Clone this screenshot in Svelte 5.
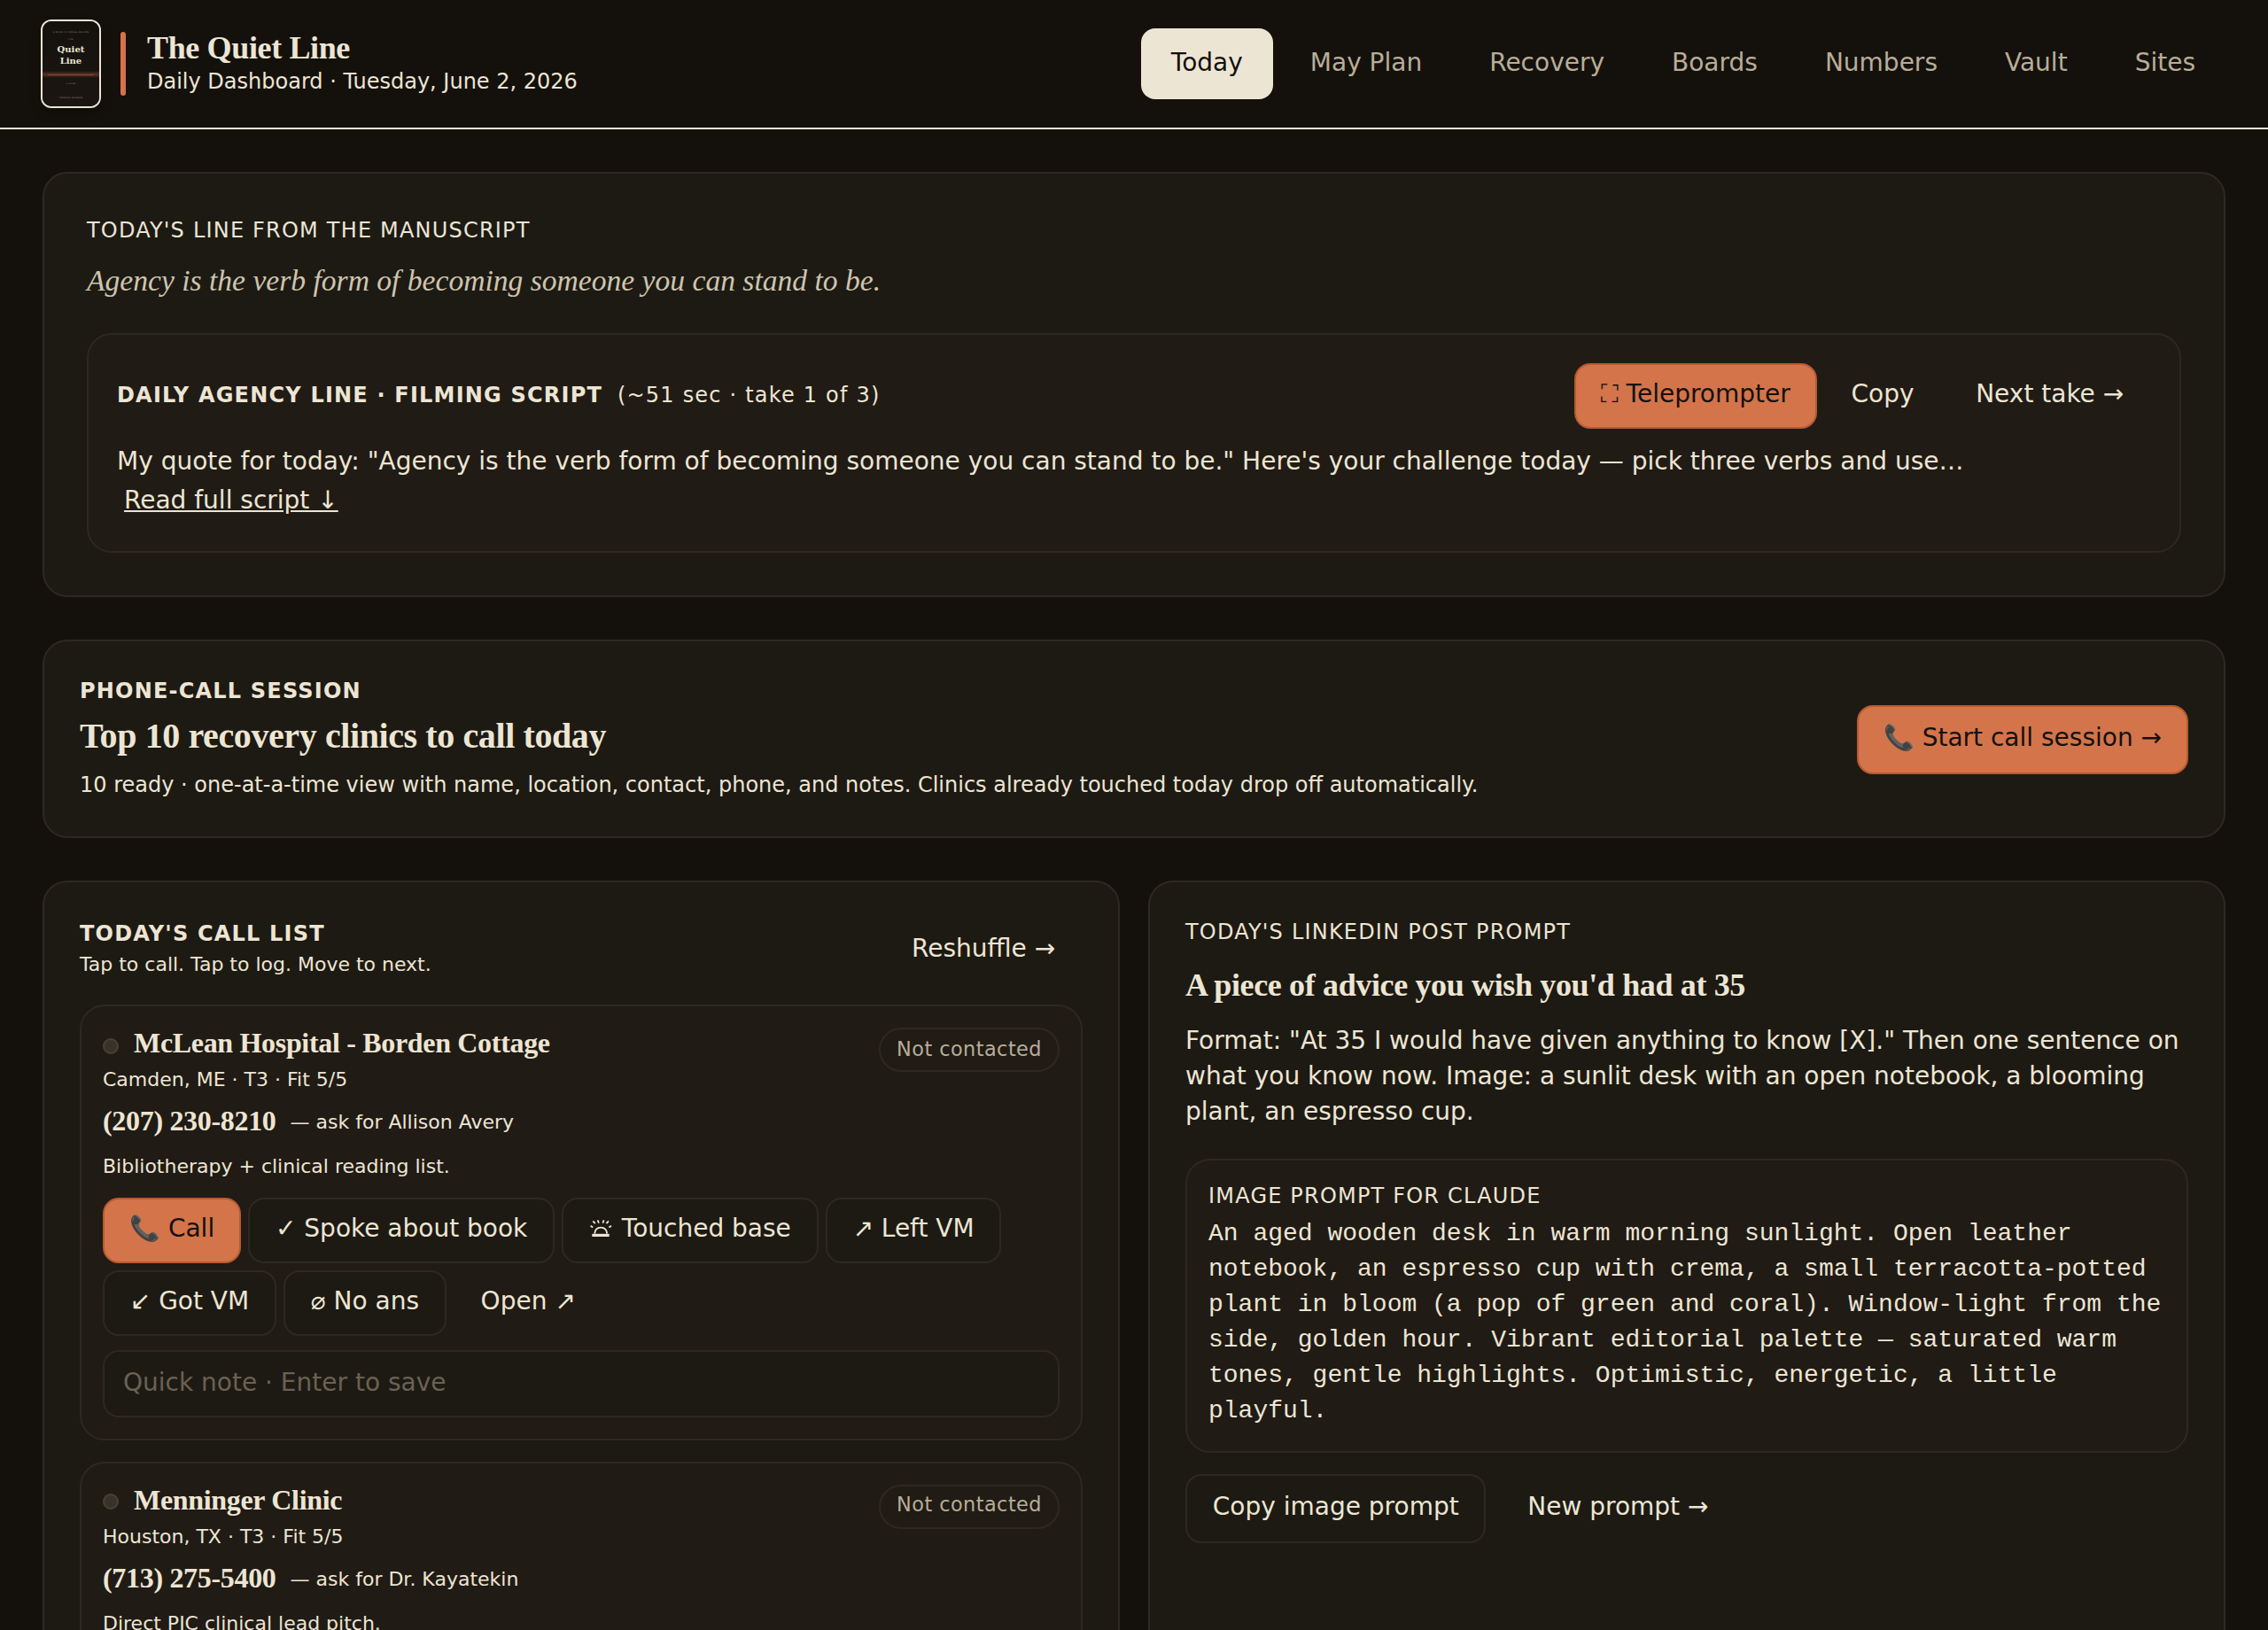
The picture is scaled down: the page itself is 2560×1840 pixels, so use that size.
<script>
  const nav = ['Today', 'May Plan', 'Recovery', 'Boards', 'Numbers', 'Vault', 'Sites'];

  const clinics = [
    {
      name: 'McLean Hospital - Borden Cottage',
      meta: 'Camden, ME · T3 · Fit 5/5',
      phone: '(207) 230-8210',
      ask: '— ask for Allison Avery',
      note: 'Bibliotherapy + clinical reading list.'
    },
    {
      name: 'Menninger Clinic',
      meta: 'Houston, TX · T3 · Fit 5/5',
      phone: '(713) 275-5400',
      ask: '— ask for Dr. Kayatekin',
      note: 'Direct PIC clinical lead pitch.'
    }
  ];
</script>

<div class="page">
  <header class="topbar">
    <div class="cover">
      <span class="tiny">A BOOK OF SMALL ROOMS</span>
      <span class="tiny the">THE</span>
      <span class="cover-title">Quiet</span>
      <span class="cover-title">Line</span>
      <span class="glow"></span>
      <span class="tiny novel">a novel</span>
      <span class="tiny author">TRISTAN WALKER</span>
    </div>
    <span class="accent"></span>
    <div class="brand">
      <h1>The Quiet Line</h1>
      <p>Daily Dashboard · Tuesday, June 2, 2026</p>
    </div>
    <nav>
      {#each nav as item, i}
        <a class:active={i === 0}>{item}</a>
      {/each}
    </nav>
  </header>

  <main>
    <section class="card manuscript">
      <div class="label">TODAY'S LINE FROM THE MANUSCRIPT</div>
      <p class="quote">Agency is the verb form of becoming someone you can stand to be.</p>
      <div class="inner script">
        <div class="script-head">
          <div class="script-label">
            <span class="label strong">DAILY AGENCY LINE · FILMING SCRIPT</span>
            <span class="label">(~51 sec · take 1 of 3)</span>
          </div>
          <div class="btns">
            <button class="btn primary">⛶ Teleprompter</button>
            <button class="btn ghost">Copy</button>
            <button class="btn ghost">Next take →</button>
          </div>
        </div>
        <div class="script-body">
          <p>My quote for today: "Agency is the verb form of becoming someone you can stand to be." Here's your challenge today — pick three verbs and use…</p>
          <a class="more">Read full script ↓</a>
        </div>
      </div>
    </section>

    <section class="card session">
      <div>
        <div class="label strong">PHONE-CALL SESSION</div>
        <h2>Top 10 recovery clinics to call today</h2>
        <p>10 ready · one-at-a-time view with name, location, contact, phone, and notes. Clinics already touched today drop off automatically.</p>
      </div>
      <button class="btn tall primary">📞 Start call session →</button>
    </section>

    <div class="columns">
      <section class="card calls">
        <div class="calls-head">
          <div>
            <div class="label strong">TODAY'S CALL LIST</div>
            <p class="small">Tap to call. Tap to log. Move to next.</p>
          </div>
          <button class="btn ghost">Reshuffle →</button>
        </div>
        {#each clinics as c}
          <article class="inner clinic">
            <div class="clinic-head">
              <div>
                <div class="name"><span class="dot"></span>{c.name}</div>
                <p class="small meta">{c.meta}</p>
              </div>
              <span class="pill">Not contacted</span>
            </div>
            <div class="phone"><b>{c.phone}</b><span class="small">{c.ask}</span></div>
            <p class="small note">{c.note}</p>
            <div class="btns wrap">
              <button class="btn primary">📞 Call</button>
              <button class="btn">✓ Spoke about book</button>
              <button class="btn">
                <svg class="bell" viewBox="0 0 28 20" fill="none" stroke="currentColor">
                  <path d="M3.3 18.4H22.7" stroke-width="3.2" />
                  <path d="M6.2 16.6C6.6 12 9 9.6 13.2 9.6S19.8 12 20.2 16.6" stroke-width="1.8" />
                  <path d="M1.6 7.8 4.2 9.6M4.3 2.4 6.8 5.2M9.6 1.4 11 4.6M16.6 1.4 15.4 4.6M21.9 2.4 19.5 5.2M25 7.8 22.4 9.6" stroke-width="1.8" />
                </svg> Touched base
              </button>
              <button class="btn">↗ Left VM</button>
              <button class="btn">↙ Got VM</button>
              <button class="btn">⌀ No ans</button>
              <button class="btn ghost">Open ↗</button>
            </div>
            <input placeholder="Quick note · Enter to save" />
          </article>
        {/each}
      </section>

      <section class="card prompt">
        <div class="label">TODAY'S LINKEDIN POST PROMPT</div>
        <h3>A piece of advice you wish you'd had at 35</h3>
        <p class="format">Format: "At 35 I would have given anything to know [X]." Then one sentence on what you know now. Image: a sunlit desk with an open notebook, a blooming plant, an espresso cup.</p>
        <div class="inner image-prompt">
          <div class="label">IMAGE PROMPT FOR CLAUDE</div>
          <p>An aged wooden desk in warm morning sunlight. Open leather notebook, an espresso cup with crema, a small terracotta-potted plant in bloom (a pop of green and coral). Window-light from the side, golden hour. Vibrant editorial palette — saturated warm tones, gentle highlights. Optimistic, energetic, a little playful.</p>
        </div>
        <div class="btns wide">
          <button class="btn tall">Copy image prompt</button>
          <button class="btn tall ghost">New prompt →</button>
        </div>
      </section>
    </div>
  </main>
</div>

<style>
  :global(body) {
    background: #14110c;
    overflow: hidden;
  }

  .page {
    --cream: #ede5d3;
    --line: #2f2822;
    --surface: #1d1a13;
    --inset: #201b15;
    --serif: 'Liberation Serif', serif;
    height: 1840px;
    overflow: hidden;
    background: #14110c;
    color: var(--cream);
    font-family: 'DejaVu Sans', sans-serif;
    font-size: 28px;
  }

  .page * {
    box-sizing: border-box;
  }

  h1,
  h2,
  h3,
  p {
    margin: 0;
  }

  .topbar {
    height: 146px;
    padding: 0 48px;
    display: flex;
    align-items: center;
    gap: 24px;
    border-bottom: 2px solid var(--cream);
  }

  .cover {
    width: 64px;
    height: 96px;
    border-radius: 10px;
    box-shadow: 0 0 0 2px var(--cream), 0 6px 14px rgba(0, 0, 0, 0.3);
    background: linear-gradient(#14110d, #1c1613);
    display: flex;
    flex-direction: column;
    align-items: center;
    overflow: hidden;
    white-space: nowrap;
    font-family: 'DejaVu Serif', serif;
  }

  .tiny {
    height: 4px;
    margin-top: 11px;
    font-size: 2.5px;
    line-height: 4px;
    letter-spacing: 0.2px;
    color: #a09683;
  }

  .tiny.the {
    margin-top: 4px;
    margin-bottom: 2px;
  }

  .cover-title {
    font-size: 10px;
    line-height: 13px;
    font-weight: 700;
  }

  .glow {
    width: 64px;
    height: 8px;
    margin-top: 5px;
    flex: none;
    background:
      linear-gradient(#8a4d33, #8a4d33) center / 52px 1px no-repeat,
      linear-gradient(transparent, rgba(150, 80, 50, 0.5), transparent);
  }

  .tiny.novel {
    margin-top: 5px;
  }

  .tiny.author {
    margin-top: 12px;
  }

  .accent {
    width: 6px;
    height: 72px;
    border-radius: 3px;
    background: #d3744a;
  }

  .brand {
    flex: 1;
  }

  h1 {
    font: 700 36px/40px var(--serif);
    letter-spacing: -0.01em;
  }

  .brand p {
    font-size: 24px;
    line-height: 36px;
  }

  nav {
    display: flex;
    gap: 8px;
  }

  nav a {
    padding: 19px 34px 22px;
    border-radius: 16px;
    line-height: 39px;
    color: #b9ad97;
  }

  nav a.active {
    background: var(--cream);
    color: #14110c;
  }

  main {
    padding: 48px;
    display: flex;
    flex-direction: column;
    gap: 48px;
  }

  .card,
  .inner {
    border: 2px solid var(--line);
    border-radius: 28px;
  }

  .card {
    padding: 40px;
    background: var(--surface);
  }

  .inner {
    background: var(--inset);
  }

  .label {
    font-size: 24px;
    line-height: 32px;
    letter-spacing: 0.05em;
  }

  .strong {
    font-weight: 700;
  }

  .small {
    font-size: 22px;
    line-height: 37px;
  }

  .btns {
    display: flex;
    gap: 8px;
  }

  .btns.wide {
    gap: 16px;
  }

  .btns.wrap {
    flex-wrap: wrap;
  }

  .btn {
    height: 74px;
    padding: 15px 28.8px 20px;
    border: 2px solid var(--line);
    border-radius: 18px;
    background: var(--surface);
    color: var(--cream);
    font: inherit;
    line-height: 35px;
    white-space: nowrap;
  }

  .btn.tall {
    height: 78px;
    padding-top: 17px;
    padding-bottom: 22px;
  }

  .btn.primary {
    padding-left: 28px;
    padding-right: 28px;
    background: #d3744a;
    border-color: #b85a30;
    color: #14110c;
  }

  .btn.ghost {
    background: transparent;
    border-color: transparent;
  }

  .bell {
    width: 28px;
    height: 20px;
    vertical-align: baseline;
  }

  .manuscript {
    height: 480px;
    padding: 48px;
  }

  .quote {
    margin-top: 16px;
    font: italic 33.6px/49px var(--serif);
    color: #cfc4b0;
  }

  .script {
    height: 248px;
    margin-top: 35px;
    padding: 32px;
  }

  .script-head {
    display: flex;
    justify-content: space-between;
    align-items: center;
  }

  .script-label {
    display: flex;
    gap: 17px;
    padding-bottom: 2px;
  }

  .script-body {
    margin-top: 15px;
    line-height: 44px;
  }

  .more {
    margin-left: 8px;
    text-decoration: underline;
  }

  .session {
    height: 224px;
    display: flex;
    justify-content: space-between;
    align-items: center;
  }

  .session .btn {
    margin-top: 2px;
  }

  h2 {
    margin-top: 8px;
    font: 700 40px/53px var(--serif);
    letter-spacing: -0.01em;
  }

  .session p {
    margin-top: 11px;
    font-size: 24px;
    line-height: 36px;
  }

  .columns {
    display: grid;
    grid-template-columns: 1fr 1fr;
    gap: 32px;
  }

  .calls-head {
    display: flex;
    justify-content: space-between;
  }

  .calls-head > div {
    padding-top: 2px;
  }

  .clinic {
    height: 492px;
    margin-top: 24px;
    padding: 24px;
  }

  .clinic-head {
    display: flex;
    justify-content: space-between;
    align-items: flex-start;
  }

  .name {
    display: flex;
    align-items: flex-start;
    gap: 17px;
    font: 700 32px/34px var(--serif);
    letter-spacing: -0.01em;
  }

  .dot {
    width: 18px;
    height: 18px;
    margin-top: 12px;
    border: 2px solid #4a4034;
    border-radius: 50%;
    background: #3a3228;
  }

  .clinic + .clinic .dot {
    margin-top: 10px;
  }

  .meta {
    margin-top: 6px;
  }

  .pill {
    height: 50px;
    padding: 9px 18px 10px;
    border: 2px solid var(--line);
    border-radius: 25px;
    font-size: 22.4px;
    line-height: 27px;
    letter-spacing: 0.02em;
    color: #b9ad97;
  }

  .clinic + .clinic .pill {
    padding-top: 7px;
  }

  .phone {
    height: 36px;
    margin-top: 10px;
    display: flex;
    gap: 16px;
  }

  .phone b {
    font: 700 32px/36px var(--serif);
    letter-spacing: -0.01em;
  }

  .phone .small {
    line-height: 39px;
  }

  .note {
    margin-top: 15px;
    margin-bottom: 17px;
  }

  input {
    width: 100%;
    height: 76px;
    margin-top: 16px;
    padding: 0 21px 4px;
    border: 2px solid var(--line);
    border-radius: 18px;
    background: var(--surface);
    color: var(--cream);
    font: inherit;
  }

  input::placeholder {
    color: #6b6153;
  }

  h3 {
    margin-top: 20px;
    font: 700 36px/48px var(--serif);
    letter-spacing: -0.01em;
  }

  .format {
    margin-top: 19px;
    line-height: 40px;
  }

  .image-prompt {
    height: 332px;
    margin: 33px 0 24px;
    padding: 24px;
  }

  .image-prompt p {
    margin-top: 7px;
    font: 28px/40px 'Liberation Mono', monospace;
  }
</style>
